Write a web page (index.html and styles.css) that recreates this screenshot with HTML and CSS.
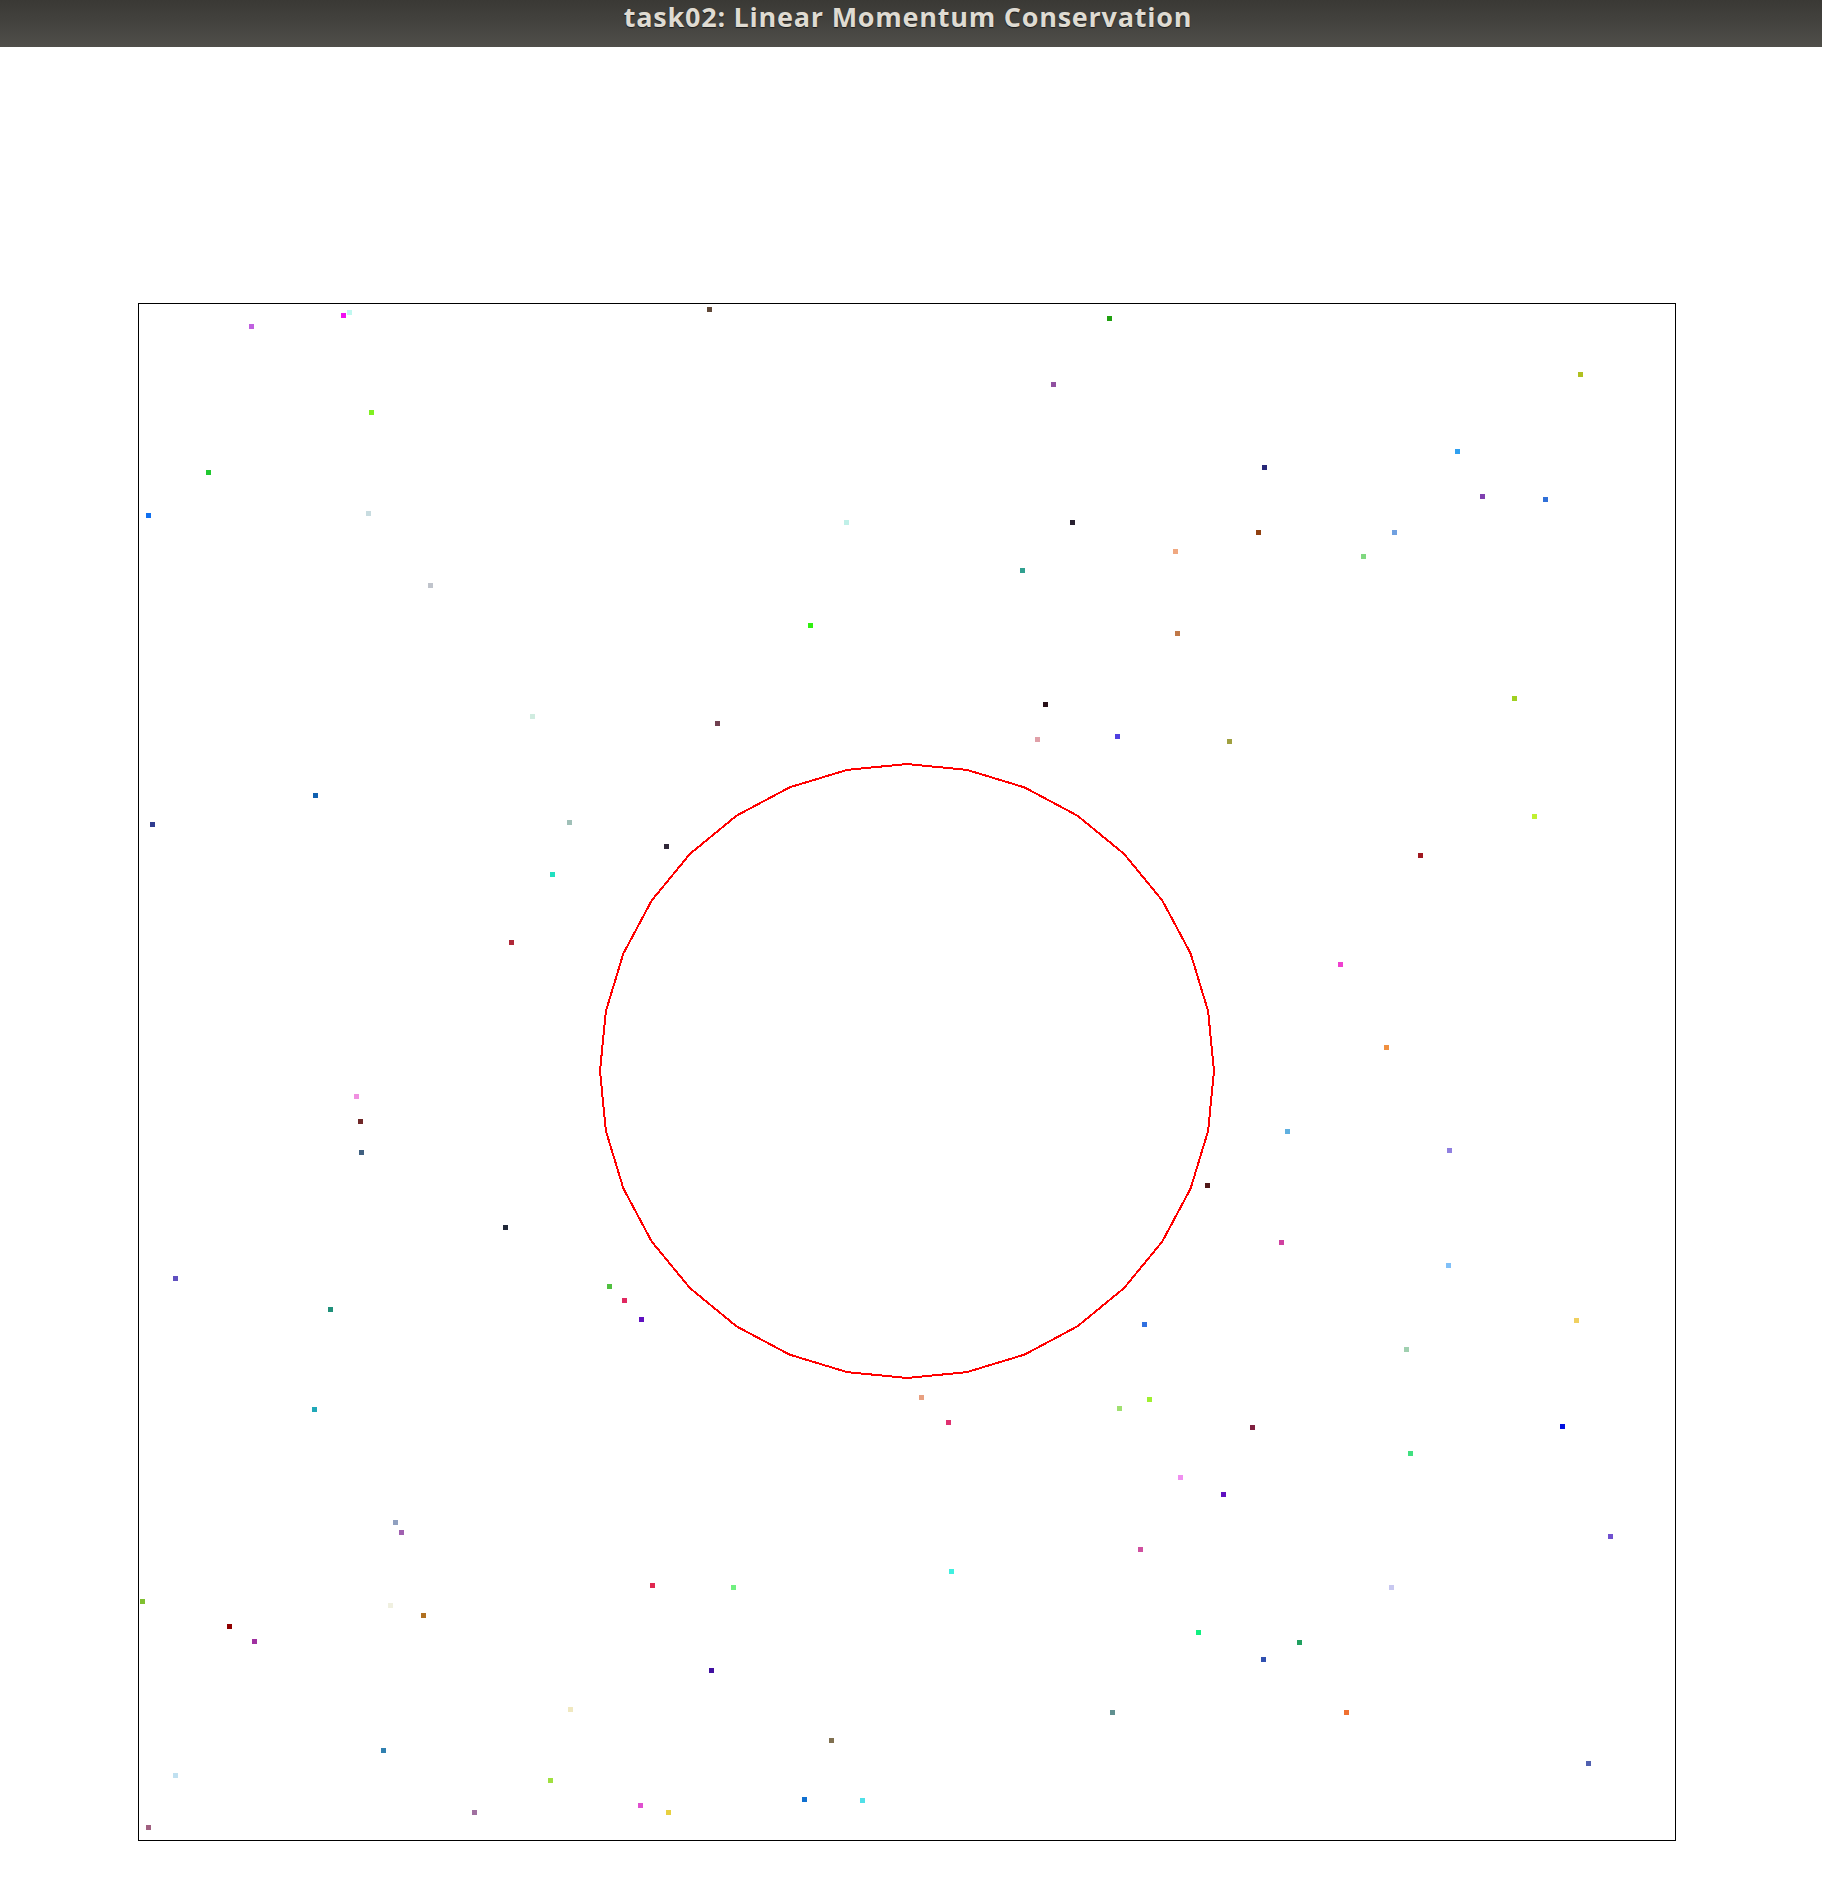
FILE: index.html
```html
<!DOCTYPE html>
<html>
<head>
<meta charset="utf-8">
<title>task02: Linear Momentum Conservation</title>
<link rel="stylesheet" href="styles.css">
</head>
<body>
<header class="titlebar"><span class="title">task02: Linear Momentum Conservation</span></header>
<main class="stage">
<div class="box">
<svg class="sim" width="1536" height="1536" viewBox="1 1 1536 1536" xmlns="http://www.w3.org/2000/svg">
<polygon class="ring" points="769,461 828.89,466.9 886.48,484.37 939.56,512.74 986.08,550.92 1024.26,597.44 1052.63,650.52 1070.1,708.11 1076,768 1070.1,827.89 1052.63,885.48 1024.26,938.56 986.08,985.08 939.56,1023.26 886.48,1051.63 828.89,1069.1 769,1075 709.11,1069.1 651.52,1051.63 598.44,1023.26 551.92,985.08 513.74,938.56 485.37,885.48 467.9,827.89 462,768 467.9,708.11 485.37,650.52 513.74,597.44 551.92,550.92 598.44,512.74 651.52,484.37 709.11,466.9"/>
<g class="dots">
<rect x="111" y="21" fill="#c060e0"/>
<rect x="203" y="10" fill="#f010f0"/>
<rect x="209" y="7" fill="#c0f8f0"/>
<rect x="569" y="4" fill="#604838"/>
<rect x="231" y="107" fill="#80f020"/>
<rect x="68" y="167" fill="#20c830"/>
<rect x="8" y="210" fill="#1070f0"/>
<rect x="228" y="208" fill="#c8dce0"/>
<rect x="706" y="217" fill="#c0f0e8"/>
<rect x="290" y="280" fill="#c0c4cc"/>
<rect x="670" y="320" fill="#30f010"/>
<rect x="392" y="411" fill="#d0ece0"/>
<rect x="577" y="418" fill="#704050"/>
<rect x="175" y="490" fill="#1060b0"/>
<rect x="12" y="519" fill="#303c90"/>
<rect x="429" y="517" fill="#a0c0b8"/>
<rect x="526" y="541" fill="#302838"/>
<rect x="412" y="569" fill="#20e0c0"/>
<rect x="371" y="637" fill="#b02838"/>
<rect x="969" y="13" fill="#20a010"/>
<rect x="913" y="79" fill="#9050a0"/>
<rect x="1440" y="69" fill="#b0c020"/>
<rect x="1317" y="146" fill="#30a0f0"/>
<rect x="1124" y="162" fill="#282878"/>
<rect x="1342" y="191" fill="#8040b0"/>
<rect x="1405" y="194" fill="#3070d8"/>
<rect x="932" y="217" fill="#282030"/>
<rect x="1118" y="227" fill="#904010"/>
<rect x="1254" y="227" fill="#70a0e0"/>
<rect x="1035" y="246" fill="#f0a880"/>
<rect x="1223" y="251" fill="#80d880"/>
<rect x="882" y="265" fill="#30a090"/>
<rect x="1037" y="328" fill="#c07848"/>
<rect x="1374" y="393" fill="#a0d020"/>
<rect x="905" y="399" fill="#281018"/>
<rect x="897" y="434" fill="#e0a0a8"/>
<rect x="977" y="431" fill="#5040e0"/>
<rect x="1089" y="436" fill="#a0a040"/>
<rect x="1394" y="511" fill="#c0f030"/>
<rect x="1280" y="550" fill="#a01820"/>
<rect x="1200" y="659" fill="#f040d0"/>
<rect x="1246" y="742" fill="#f09040"/>
<rect x="216" y="791" fill="#f090e0"/>
<rect x="220" y="816" fill="#702828"/>
<rect x="221" y="847" fill="#406080"/>
<rect x="365" y="922" fill="#202838"/>
<rect x="35" y="973" fill="#6050c0"/>
<rect x="190" y="1004" fill="#20907a"/>
<rect x="469" y="981" fill="#50c040"/>
<rect x="484" y="995" fill="#e02860"/>
<rect x="501" y="1014" fill="#6010c0"/>
<rect x="174" y="1104" fill="#20a8b8"/>
<rect x="255" y="1217" fill="#90a0c0"/>
<rect x="261" y="1227" fill="#a060b0"/>
<rect x="512" y="1280" fill="#e02850"/>
<rect x="593" y="1282" fill="#70f080"/>
<rect x="2" y="1296" fill="#80c030"/>
<rect x="250" y="1300" fill="#f0f0e0"/>
<rect x="283" y="1310" fill="#b07020"/>
<rect x="89" y="1321" fill="#900000"/>
<rect x="114" y="1336" fill="#a030a0"/>
<rect x="571" y="1365" fill="#4010a0"/>
<rect x="430" y="1404" fill="#f0e8c0"/>
<rect x="243" y="1445" fill="#3080b0"/>
<rect x="691" y="1435" fill="#807050"/>
<rect x="35" y="1470" fill="#c0e0f0"/>
<rect x="410" y="1475" fill="#a0e040"/>
<rect x="334" y="1507" fill="#a070a0"/>
<rect x="500" y="1500" fill="#e050d0"/>
<rect x="528" y="1507" fill="#e8d040"/>
<rect x="664" y="1494" fill="#1070d0"/>
<rect x="722" y="1495" fill="#50e0e8"/>
<rect x="8" y="1522" fill="#a06080"/>
<rect x="1147" y="826" fill="#60b0e0"/>
<rect x="1309" y="845" fill="#9080e0"/>
<rect x="1067" y="880" fill="#501818"/>
<rect x="1141" y="937" fill="#d040a0"/>
<rect x="1308" y="960" fill="#80c0f8"/>
<rect x="1436" y="1015" fill="#f0d060"/>
<rect x="1004" y="1019" fill="#3070e0"/>
<rect x="1266" y="1044" fill="#a0d0b0"/>
<rect x="781" y="1092" fill="#e8a080"/>
<rect x="979" y="1103" fill="#a0e070"/>
<rect x="1009" y="1094" fill="#a0f030"/>
<rect x="808" y="1117" fill="#e03070"/>
<rect x="1112" y="1122" fill="#802040"/>
<rect x="1422" y="1121" fill="#0010e0"/>
<rect x="1270" y="1148" fill="#40e080"/>
<rect x="1040" y="1172" fill="#f090f0"/>
<rect x="1083" y="1189" fill="#6010c0"/>
<rect x="1470" y="1231" fill="#7050d0"/>
<rect x="1000" y="1244" fill="#d050a0"/>
<rect x="811" y="1266" fill="#40f0e0"/>
<rect x="1251" y="1282" fill="#c8c8f0"/>
<rect x="1058" y="1327" fill="#10f080"/>
<rect x="1159" y="1337" fill="#20a060"/>
<rect x="1123" y="1354" fill="#3050b0"/>
<rect x="972" y="1407" fill="#609090"/>
<rect x="1206" y="1407" fill="#f07030"/>
<rect x="1448" y="1458" fill="#5060b0"/>
</g>
</svg>
</div>
</main>
</body>
</html>
```
FILE: styles.css
```css
html, body {
  margin: 0;
  padding: 0;
  background: #ffffff;
}

.titlebar {
  height: 47px;
  box-sizing: border-box;
  padding-top: 3px;
  display: flex;
  align-items: flex-start;
  justify-content: center;
  background: linear-gradient(to bottom, #3a3935 0%, #44433f 50%, #504f4a 100%);
}

.title {
  font-family: "Open Sans", "DejaVu Sans", sans-serif;
  font-weight: 700;
  font-size: 27px;
  line-height: 27px;
  letter-spacing: 0.75px;
  color: #dfdbd2;
  text-shadow: 0 1px 1px rgba(0, 0, 0, 0.6);
  margin-left: -6px;
}

.stage {
  padding: 256px 0 0 138px;
}

.box {
  width: 1536px;
  height: 1536px;
  border: 1px solid #000000;
}

.sim {
  display: block;
}

.ring {
  fill: none;
  stroke: #ff0000;
  stroke-width: 2;
  shape-rendering: crispEdges;
}

.dots rect {
  width: 5px;
  height: 5px;
  shape-rendering: crispEdges;
}
```
